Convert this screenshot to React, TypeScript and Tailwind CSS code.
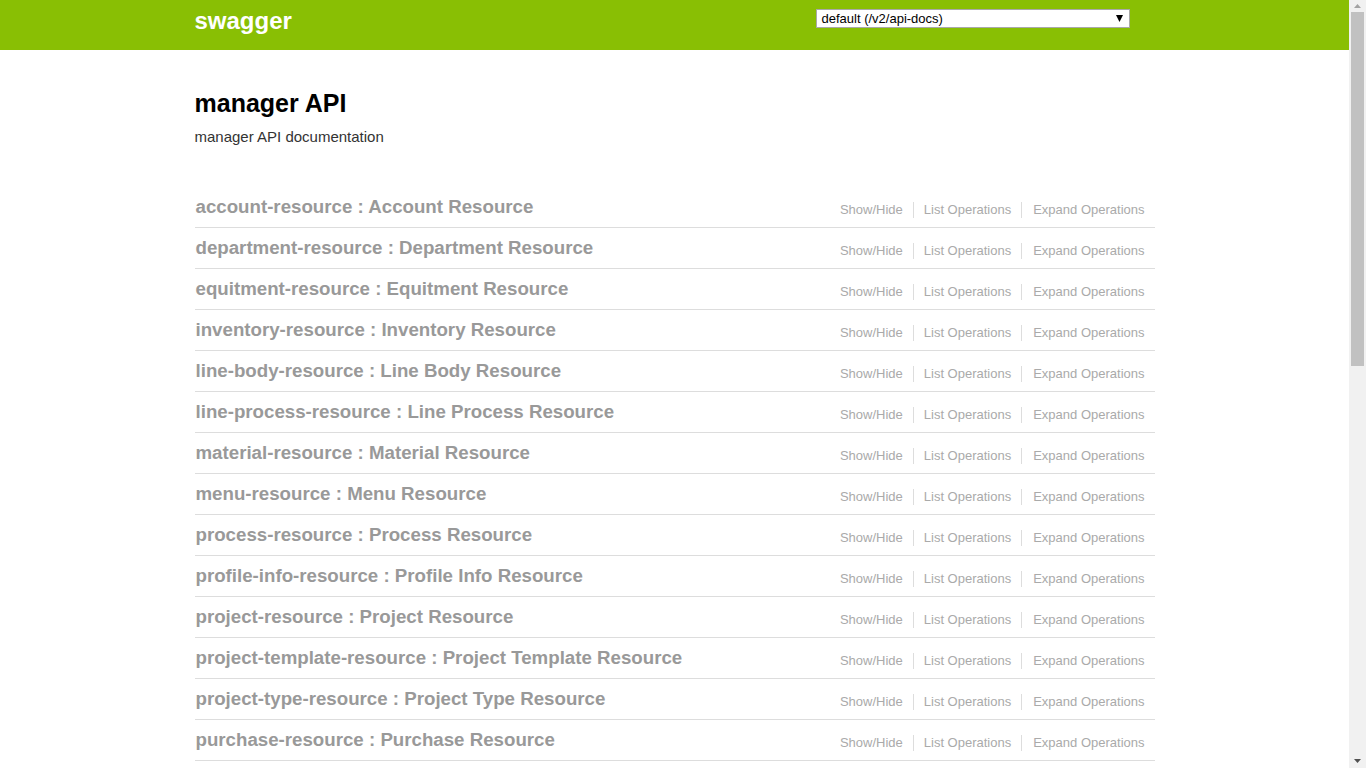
import React from 'react';

const resources = [
  { name: 'account-resource', desc: 'Account Resource' },
  { name: 'department-resource', desc: 'Department Resource' },
  { name: 'equitment-resource', desc: 'Equitment Resource' },
  { name: 'inventory-resource', desc: 'Inventory Resource' },
  { name: 'line-body-resource', desc: 'Line Body Resource' },
  { name: 'line-process-resource', desc: 'Line Process Resource' },
  { name: 'material-resource', desc: 'Material Resource' },
  { name: 'menu-resource', desc: 'Menu Resource' },
  { name: 'process-resource', desc: 'Process Resource' },
  { name: 'profile-info-resource', desc: 'Profile Info Resource' },
  { name: 'project-resource', desc: 'Project Resource' },
  { name: 'project-template-resource', desc: 'Project Template Resource' },
  { name: 'project-type-resource', desc: 'Project Type Resource' },
  { name: 'purchase-resource', desc: 'Purchase Resource' },
  { name: 'role-resource', desc: 'Role Resource' },
  { name: 'user-resource', desc: 'User Resource' },
];

function ResourceRow({ name, desc }: { name: string; desc: string }) {
  return (
    <li className="flex h-[41px] items-start justify-between border-b border-[#ddd]">
      <h2 className="pl-[1px] text-[18.7px] font-bold leading-[40px] text-[#999]">
        <a href="#">
          {name} : {desc}
        </a>
      </h2>
      <ul className="mt-[15px] flex text-[13px] leading-[16px] text-[#aaa]">
        <li className="border-r border-[#ddd] px-[10px]">
          <a href="#">Show/Hide</a>
        </li>
        <li className="border-r border-[#ddd] px-[10px]">
          <a href="#">List Operations</a>
        </li>
        <li className="pl-[11px] pr-[10px]">
          <a href="#">Expand Operations</a>
        </li>
      </ul>
    </li>
  );
}

function Scrollbar() {
  return (
    <div className="flex h-full w-[17px] shrink-0 flex-col items-center bg-[#f1f1f1]">
      <div className="flex h-[12px] items-center justify-center">
        <svg width="7" height="4" viewBox="0 0 7 4">
          <polygon points="3.5,0 7,4 0,4" fill="#a3a3a3" />
        </svg>
      </div>
      <div className="h-[354px] w-[13px] bg-[#c1c1c1]" />
      <div className="flex-1" />
      <div className="flex h-[14px] items-center justify-center">
        <svg width="7" height="4" viewBox="0 0 7 4">
          <polygon points="0,0 7,0 3.5,4" fill="#505050" />
        </svg>
      </div>
    </div>
  );
}

export default function App() {
  return (
    <div className="flex h-screen w-full overflow-hidden bg-white font-['Liberation_Sans',Arial,sans-serif]">
      <div className="flex-1 overflow-hidden">
        {/* Header */}
        <div className="h-[50px] bg-[#89bf04]">
          <div className="mx-auto flex w-[960px] items-start">
            <a href="#" className="mt-[7px] text-[24px] font-bold leading-[28px] text-white">
              swagger
            </a>
            <div className="ml-auto mr-[25px] mt-[9px] flex h-[19px] w-[314px] items-center justify-between border border-[#a9a9a9] bg-white pl-[5px] pr-[6px]">
              <span className="text-[13px] leading-[16px] text-black">default (/v2/api-docs)</span>
              <svg width="7" height="7" viewBox="0 0 7 7">
                <polygon points="0,0 7,0 3.5,7" fill="#000" />
              </svg>
            </div>
          </div>
        </div>

        {/* Content */}
        <div className="mx-auto w-[960px]">
          <div className="pt-[39px]">
            <h1 className="text-[25px] font-bold leading-[29px] text-black">manager API</h1>
            <p className="mt-[10px] text-[15px] leading-[17px] text-[#333]">manager API documentation</p>
          </div>
          <ul className="mt-[42px]">
            {resources.map((r) => (
              <ResourceRow key={r.name} name={r.name} desc={r.desc} />
            ))}
          </ul>
        </div>
      </div>
      <Scrollbar />
    </div>
  );
}
